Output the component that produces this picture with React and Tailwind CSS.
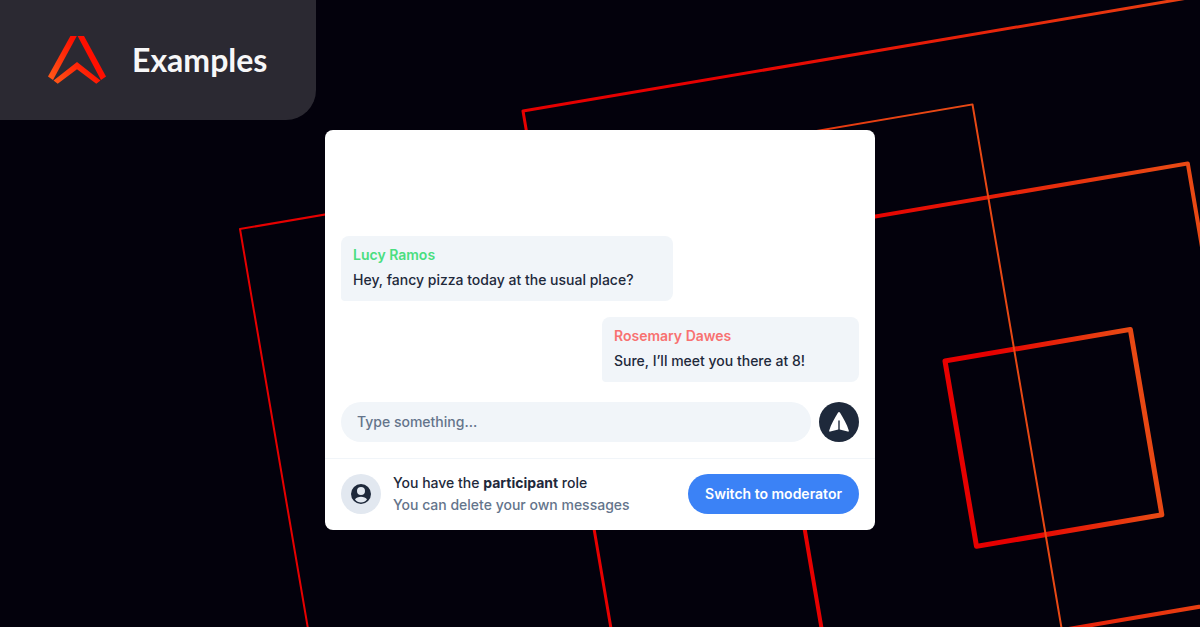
import React from "react";

const squares = [
  { x: 240, y: 229, size: 743, stroke: 2 },
  { x: 523, y: 111, size: 780, stroke: 3 },
  { x: 755, y: 237, size: 439, stroke: 4 },
  { x: 945, y: 361, size: 188, stroke: 5 },
];

function Backdrop() {
  return (
    <svg
      className="absolute inset-0 h-full w-full"
      viewBox="0 0 1200 627"
      preserveAspectRatio="xMidYMid slice"
      fill="none"
      aria-hidden="true"
    >
      <defs>
        <linearGradient id="line" x1="0.25" y1="0" x2="0.95" y2="0">
          <stop offset="0" stopColor="#e60000" />
          <stop offset="1" stopColor="#e84814" />
        </linearGradient>
      </defs>
      {[...squares].reverse().map((s) => (
        <rect
          key={s.x}
          width={s.size}
          height={s.size}
          strokeWidth={s.stroke}
          strokeLinejoin="round"
          stroke="url(#line)"
          transform={`translate(${s.x} ${s.y}) rotate(-9.65)`}
        />
      ))}
    </svg>
  );
}

function Logo() {
  return (
    <svg className="h-12 w-[58px]" viewBox="0 0 58 48" aria-hidden="true">
      <defs>
        <linearGradient id="mark" gradientUnits="userSpaceOnUse" x1="6" y1="44" x2="38" y2="20">
          <stop offset="0" stopColor="#ff5416" />
          <stop offset="1" stopColor="#ff0f00" />
        </linearGradient>
      </defs>
      <g fill="url(#mark)">
        <path d="M22.4 0H28.8L5 43.9L0 40.6Z" />
        <path d="M29.6 0H36L58 40.6L53 43.9Z" />
        <path d="M29 26L52.5 44.500L48.300 47.800L29 33.200L9.700 47.800L5.500 44.500Z" />
      </g>
    </svg>
  );
}

function Message({ name, text, className, nameClass }) {
  return (
    <li className={`flex flex-col gap-[3px] rounded-lg rounded-bl bg-[#f1f5f9] px-3 pt-2 pb-2.5 ${className}`}>
      <h2 className={`font-semibold ${nameClass}`}>{name}</h2>
      <p>{text}</p>
    </li>
  );
}

export default function App() {
  return (
    <div className="relative isolate flex min-h-screen flex-col gap-2.5 overflow-hidden bg-[#03010c] font-['Inter',sans-serif] text-sm leading-[22px] font-medium text-[#1e293b]">
      <Backdrop />
      <header className="relative flex h-[120px] items-center gap-[26px] self-start rounded-br-[30px] bg-[#2b2932] pr-[49px] pb-px pl-12">
        <Logo />
        <h1 className="font-['Lato',sans-serif] text-[32px] leading-10 font-bold text-[#f7f7f8]">Examples</h1>
      </header>

      <main className="relative flex min-h-[400px] w-full max-w-[550px] flex-col self-center rounded-lg bg-white">
        <ul className="flex flex-1 flex-col justify-end gap-4 px-4 pb-5">
          <Message
            name="Lucy Ramos"
            text="Hey, fancy pizza today at the usual place?"
            className="w-[332px] self-start"
            nameClass="text-[#4ade80]"
          />
          <Message
            name="Rosemary Dawes"
            text="Sure, I’ll meet you there at 8!"
            className="w-[257px] self-end"
            nameClass="text-[#f87171]"
          />
        </ul>

        <form className="flex gap-2 px-4 pb-4" onSubmit={(e) => e.preventDefault()}>
          <input
            type="text"
            aria-label="Message"
            placeholder="Type something..."
            className="h-10 min-w-0 flex-1 rounded-full bg-[#f1f5f9] px-4 pb-0.5 outline-none placeholder:text-[#64748b]"
          />
          <button
            type="submit"
            aria-label="Send"
            className="flex size-10 items-center justify-center rounded-full bg-[#1e293b]"
          >
            <svg className="size-5" viewBox="0 0 20 20" aria-hidden="true">
              <path
                d="M9.1 .6Q10 -.6 10.9 .6C14.200 6 18 12.500 19.800 18.600Q19.900 19.900 18.700 19.600L10.700 17.600V9Q10.700 8.200 10 8.200Q9.300 8.200 9.300 9V17.600L1.300 19.600Q.1 19.900 .2 18.600C2 12.500 5.800 6 9.100 .6Z"
                fill="white"
              />
            </svg>
          </button>
        </form>

        <footer className="flex items-center gap-3 border-t border-[#f1f5f9] px-4 pt-[15px] pb-4">
          <span className="flex size-10 items-center justify-center rounded-full bg-[#e2e8f0]">
            <svg className="size-5" viewBox="0 0 20 20" aria-hidden="true">
              <path
                fillRule="evenodd"
                className="fill-[#1e293b]"
                d="M10 0a10 10 0 1 0 0 20a10 10 0 0 0 0-20ZM10 3a4 4 0 1 1 0 8a4 4 0 0 1 0-8ZM10 12.8c2.6 0 5 .9 6 2.6a7.3 7.3 0 0 1-12 0c1-1.700 3.400-2.600 6-2.600Z"
              />
            </svg>
          </span>
          <div className="-my-0.5 flex-1">
            <p>
              You have the <strong className="font-bold">participant</strong> role
            </p>
            <p className="text-[#64748b]">You can delete your own messages</p>
          </div>
          <button type="button" className="h-10 rounded-full bg-[#3b82f6] px-[17px] font-semibold text-white">
            Switch to moderator
          </button>
        </footer>
      </main>
    </div>
  );
}
